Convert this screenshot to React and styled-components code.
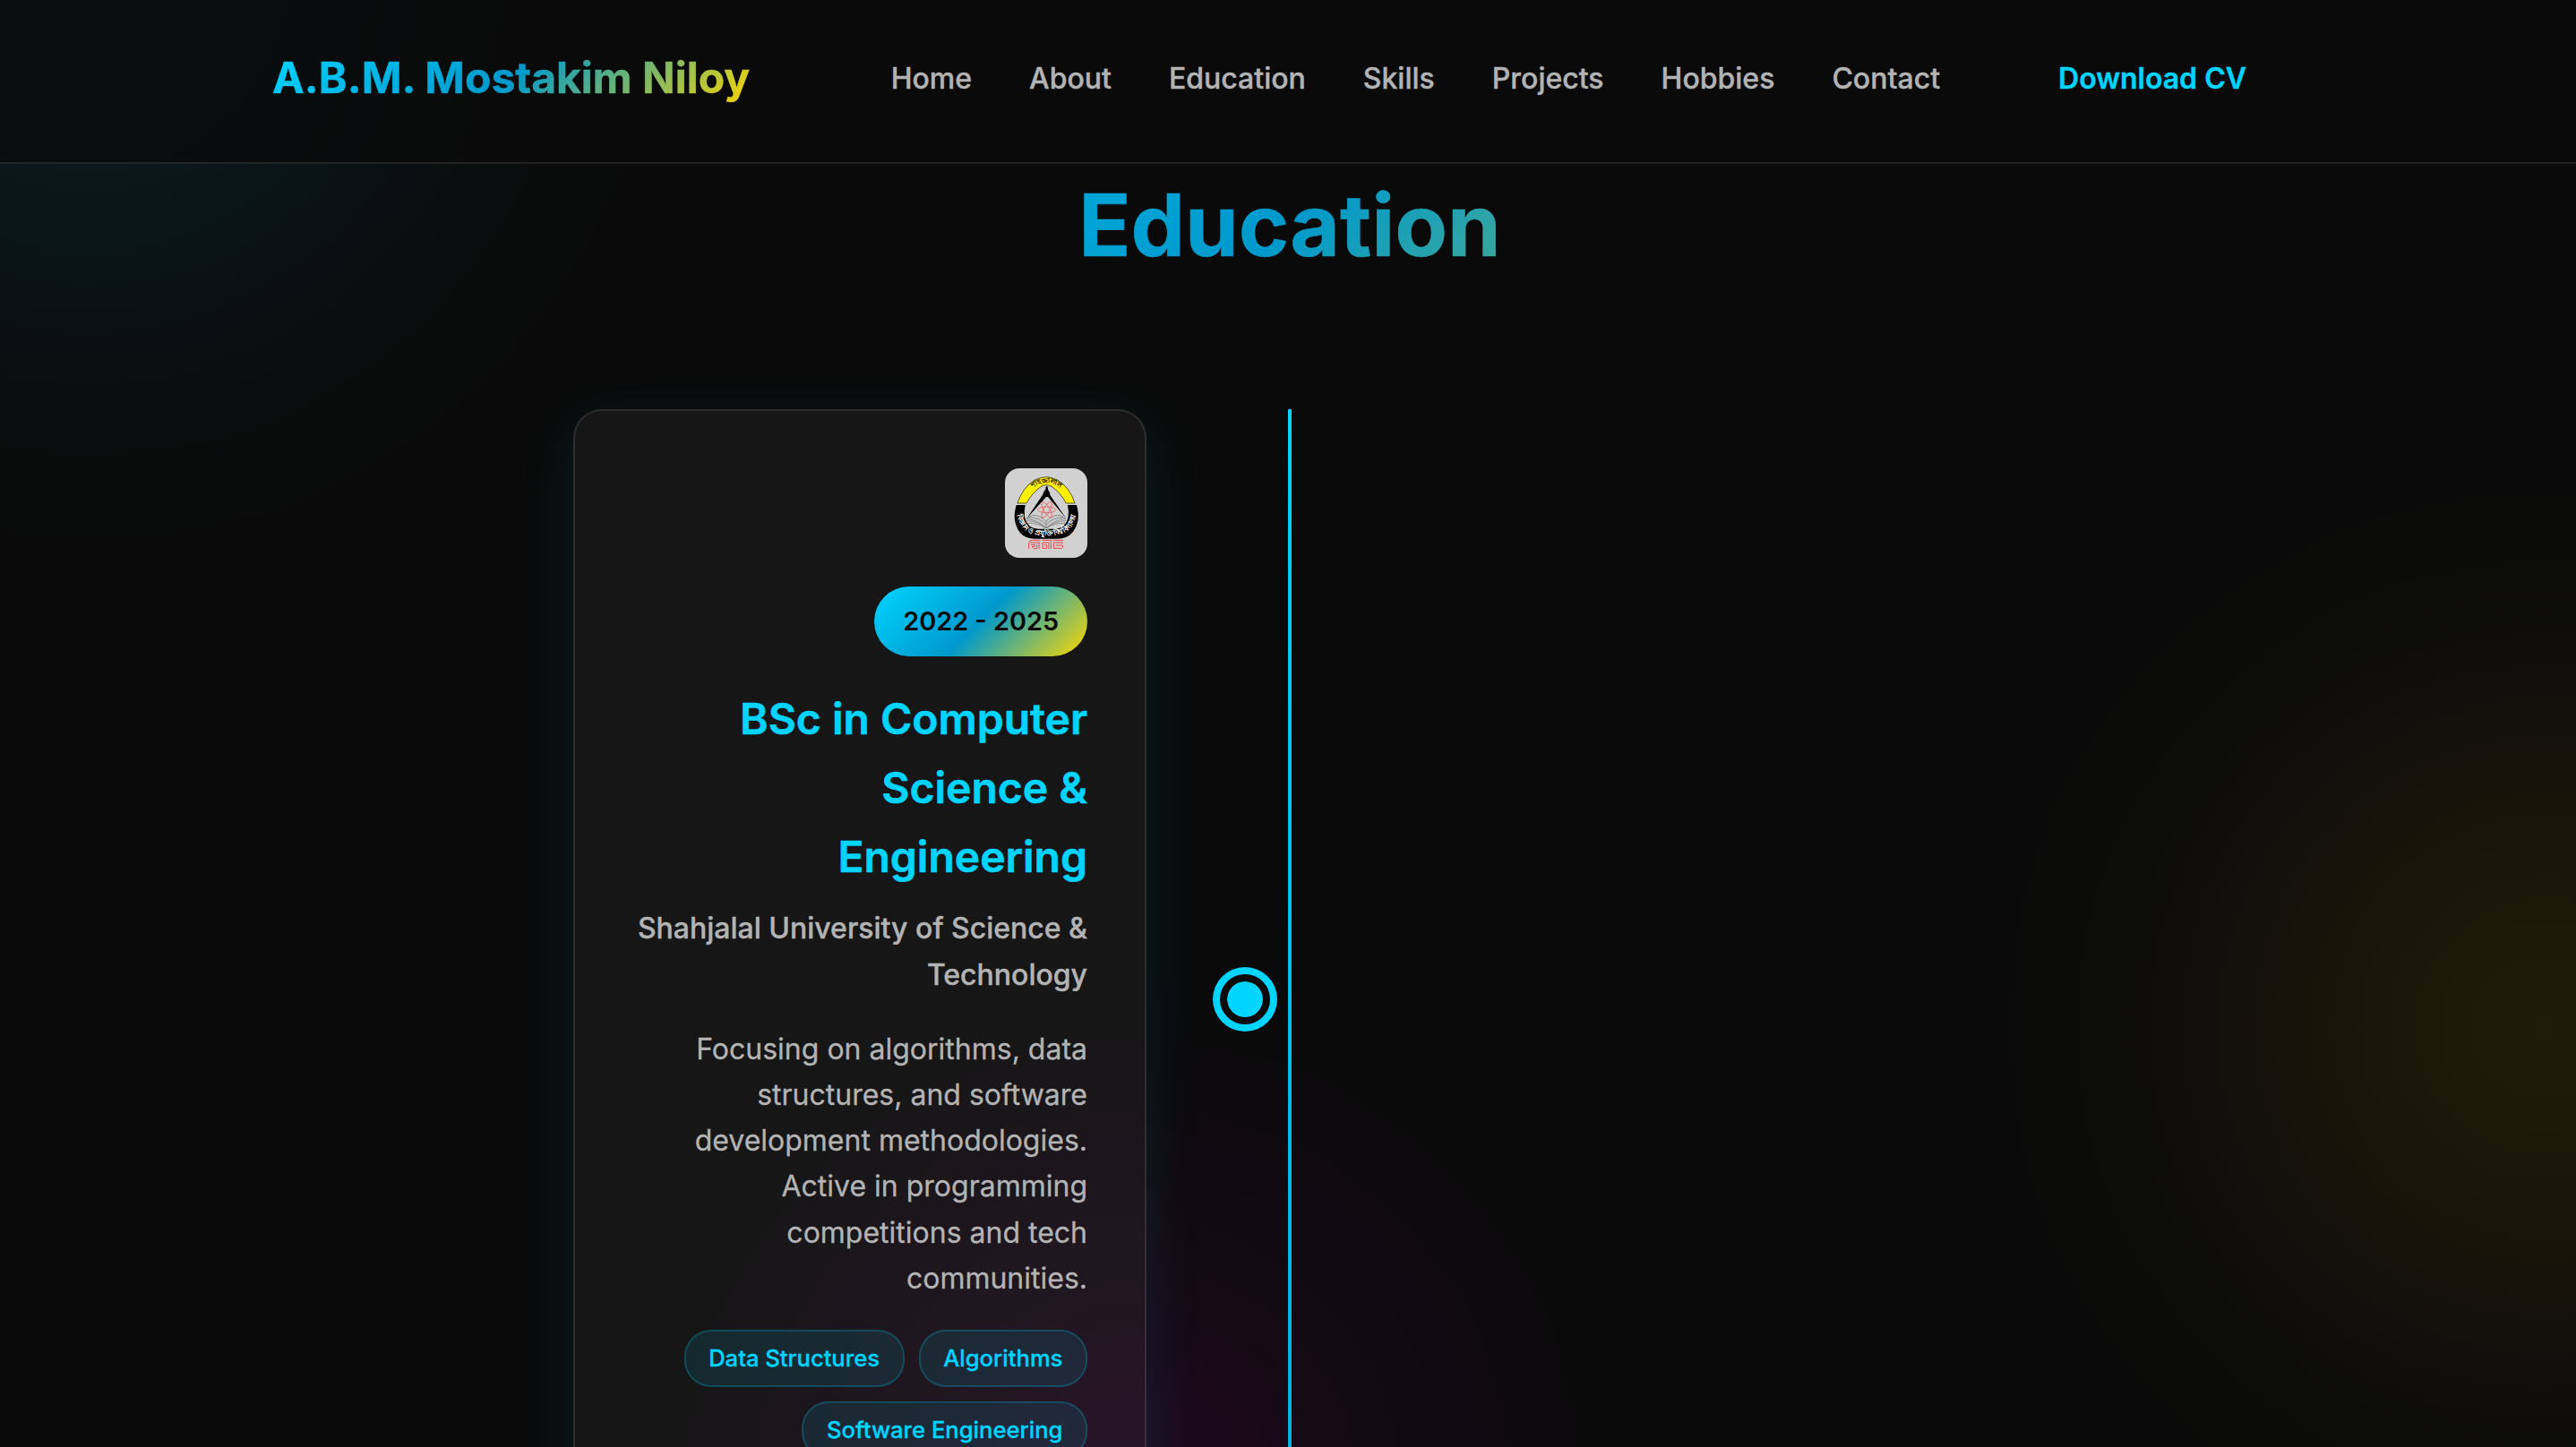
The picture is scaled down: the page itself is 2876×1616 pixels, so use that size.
import React from 'react';
import styled, { createGlobalStyle } from 'styled-components';

const GlobalStyle = createGlobalStyle`
  * { box-sizing: border-box; margin: 0; padding: 0; }
  html, body { background: #0a0a0a; overflow: hidden; }
  body { font-family: Inter, "Noto Sans", sans-serif; line-height: 1.6; color: #fff; }
`;

const gradient = 'linear-gradient(135deg, #00d4ff 0%, #0099cc 50%, #ffd700 100%)';

const glow = (rgb, alpha, radius, x, y) =>
  `radial-gradient(circle ${radius}px at ${x}px ${y}px,
    rgba(${rgb}, ${alpha}) 0%,
    rgba(${rgb}, ${alpha * 0.92}) 15%,
    rgba(${rgb}, ${alpha * 0.7}) 33%,
    rgba(${rgb}, ${alpha * 0.4}) 52%,
    rgba(${rgb}, ${alpha * 0.15}) 71%,
    rgba(${rgb}, ${alpha * 0.05}) 85%,
    rgba(${rgb}, 0) 100%)`;

const Page = styled.div`
  height: 1616px;
  overflow: hidden;
  display: flex;
  flex-direction: column;
  background:
    ${glow('0, 212, 255', 0.1, 700, 100, -30)},
    ${glow('255, 215, 0', 0.085, 660, 2840, 1147)},
    ${glow('255, 0, 255', 0.075, 620, 1265, 1660)},
    #0a0a0a;
`;

const Header = styled.header`
  flex: none;
  height: 183px;
  padding-top: 49px;
  background: rgba(10, 10, 10, 0.8);
  border-bottom: 2px solid rgba(255, 255, 255, 0.1);
`;

const HeaderInner = styled.div`
  width: 2400px;
  margin: 0 auto;
  padding: 0 66px;
  display: flex;
  align-items: center;
  justify-content: space-between;
`;

const Brand = styled.div`
  font-size: 48px;
  font-weight: 700;
  background: ${gradient};
  background-clip: text;
  -webkit-background-clip: text;
  color: transparent;
  -webkit-text-stroke: 0.5px transparent;
`;

const Nav = styled.nav`
  display: flex;
  gap: 64px;
`;

const NavLink = styled.a`
  font-size: 32px;
  font-weight: ${(p) => (p.$cta ? 600 : 500)};
  color: ${(p) => (p.$cta ? '#00d4ff' : '#b3b3b3')};
  padding: ${(p) => (p.$cta ? '0 64px 0 68px' : '0')};
  -webkit-text-stroke: 0.4px currentColor;
`;

const Section = styled.section`
  width: 2400px;
  margin: 0 auto;
  padding: 0 64px;
`;

const Heading = styled.h2`
  font-size: 96px;
  font-weight: 700;
  line-height: 154px;
  text-align: center;
  padding-left: 4px;
  margin: -9px 0 129px;
  background: ${gradient};
  background-clip: text;
  -webkit-background-clip: text;
  color: transparent;
  -webkit-text-stroke: 0.6px transparent;
`;

const Timeline = styled.div`
  display: grid;
  grid-template-columns: 640px 138px 24px;
  margin-left: 338px;
`;

const Card = styled.article`
  height: 1318px;
  padding: 64px;
  display: flex;
  flex-direction: column;
  align-items: flex-end;
  text-align: right;
  border: 2px solid rgba(255, 255, 255, 0.1);
  border-radius: 32px;
  background: rgba(255, 255, 255, 0.05);
  box-shadow: 0 16px 64px rgba(0, 212, 255, 0.1);
`;

const Marker = styled.div`
  align-self: center;
  justify-self: end;
  width: 56px;
  height: 56px;
  border: 8px solid #0a0a0a;
  border-radius: 50%;
  background: #00d4ff;
  background-clip: padding-box;
  box-shadow: 0 0 0 8px #00d4ff;
`;

const Line = styled.div`
  width: 4px;
  justify-self: end;
  background: linear-gradient(#00d4ff, #00abdb);
`;

const LogoBox = styled.div`
  width: 92px;
  height: 100px;
  flex: none;
  border-radius: 16px;
  overflow: hidden;
  background: #d1d1d1;
  margin-bottom: 32px;
  svg { display: block; width: 92px; height: 100px; }
`;

const Period = styled.span`
  padding: 16px 32px;
  border-radius: 40px;
  background: ${gradient};
  color: #0a0a0a;
  font-size: 28.8px;
  font-weight: 600;
  margin-bottom: 32px;
`;

const Degree = styled.h3`
  font-size: 48px;
  font-weight: 600;
  color: #00d4ff;
  -webkit-text-stroke: 0.6px currentColor;
  margin-bottom: 16px;
`;

const School = styled.h4`
  font-size: 32px;
  font-weight: 500;
  color: #b3b3b3;
  -webkit-text-stroke: 0.4px currentColor;
  margin-bottom: 32px;
`;

const Description = styled.p`
  font-size: 32px;
  color: #b3b3b3;
  -webkit-text-stroke: 0.3px currentColor;
  margin-bottom: 32px;
`;

const Tags = styled.div`
  display: flex;
  flex-wrap: wrap;
  justify-content: flex-end;
  gap: 16px;
`;

const Tag = styled.span`
  padding: 9.6px 25.6px;
  border: 2px solid rgba(0, 212, 255, 0.2);
  border-radius: 30px;
  background: rgba(0, 212, 255, 0.1);
  color: #00d4ff;
  font-size: 25.6px;
  font-weight: 500;
  -webkit-text-stroke: 0.3px currentColor;
`;

const links = ['Home', 'About', 'Education', 'Skills', 'Projects', 'Hobbies', 'Contact'];
const tags = ['Data Structures', 'Algorithms', 'Software Engineering'];

function UniversityLogo() {
  return (
    <svg viewBox="66 69 276 300" fill="none">
      <defs>
        <path id="archTop" d="M148 145 Q176 119 204 118 Q236 119 264 147" />
        <path id="archBottom" d="M104 207 Q106 244 126 270 Q148 295 204 295 Q262 295 284 270 Q304 244 306 205" />
      </defs>
      <path d="M108 186 Q124 134 166 108 Q188 98 204 98 Q220 98 242 108 Q284 134 300 186 L271 186 Q252 150 222 130 Q204 120 187 130 Q158 150 138 186 Z" fill="#fff000" stroke="#111" strokeWidth="2" />
      <path d="M104 192 L134 192 Q124 240 148 262 Q160 272 180 272 L230 272 Q252 272 262 262 Q286 240 276 192 L306 192 Q322 246 292 284 Q274 305 240 305 L168 305 Q134 305 116 284 Q88 246 104 192 Z" fill="#000" />
      <path d="M203 130 L209 130 L210 140 Q217 148 217 158 L271 237 L210 165 L204 165 L139 237 L192 158 Q194 146 202 140 Z" fill="#000" />
      <g stroke="#f04848" strokeWidth="2">
        <ellipse cx="206" cy="208" rx="30" ry="10" />
        <ellipse cx="206" cy="208" rx="30" ry="10" transform="rotate(60 206 208)" />
        <ellipse cx="206" cy="208" rx="30" ry="10" transform="rotate(120 206 208)" />
      </g>
      <g stroke="#666" strokeWidth="1.8">
        <path d="M204 246 Q180 224 158 226 L138 238 Q178 242 204 270 Q230 242 270 238 L250 226 Q228 224 204 246 Z" fill="#cacaca" />
        <path d="M204 246 V270 M138 244 Q180 248 204 270 M142 252 Q184 254 204 270 M270 244 Q228 248 204 270 M268 252 Q226 254 204 270 M146 233 Q184 234 204 258 Q224 234 262 233" />
      </g>
      <text fontSize="23" fontWeight="700" fill="#222" textAnchor="middle"><textPath href="#archTop" startOffset="50%">শাহজালাল</textPath></text>
      <text fontSize="24" fontWeight="700" fill="#fff" textAnchor="middle"><textPath href="#archBottom" startOffset="50%">বিজ্ঞান ও প্রযুক্তি বিশ্ববিদ্যালয়</textPath></text>
      <g stroke="#ee4545" strokeWidth="3" strokeLinejoin="round">
        <path d="M146 339 V320 Q146 310 157 310 H184 M151 318 H184 M180 319 V339 M153 325 H166 V331 H156 L164 338 H173 V325" />
        <path d="M190 310 H222 M192 318 V337 H206 V326 H198 M192 318 H213 V339 M220 310 V339" />
        <path d="M226 310 H261 M227 318 H261 M229 320 V337 H253 Q263 337 259 327 H236" />
      </g>
    </svg>
  );
}

export default function App() {
  return (
    <Page>
      <GlobalStyle />
      <Header>
        <HeaderInner>
          <Brand>A.B.M. Mostakim Niloy</Brand>
          <Nav>
            {links.map((l) => <NavLink key={l}>{l}</NavLink>)}
            <NavLink $cta>Download CV</NavLink>
          </Nav>
        </HeaderInner>
      </Header>
      <Section>
        <Heading>Education</Heading>
        <Timeline>
          <Card>
            <LogoBox><UniversityLogo /></LogoBox>
            <Period>2022 - 2025</Period>
            <Degree>BSc in Computer Science &amp; Engineering</Degree>
            <School>Shahjalal University of Science &amp; Technology</School>
            <Description>
              Focusing on algorithms, data structures, and software development methodologies. Active in
              programming competitions and tech communities.
            </Description>
            <Tags>
              {tags.map((t) => <Tag key={t}>{t}</Tag>)}
            </Tags>
          </Card>
          <Marker />
          <Line />
        </Timeline>
      </Section>
    </Page>
  );
}
